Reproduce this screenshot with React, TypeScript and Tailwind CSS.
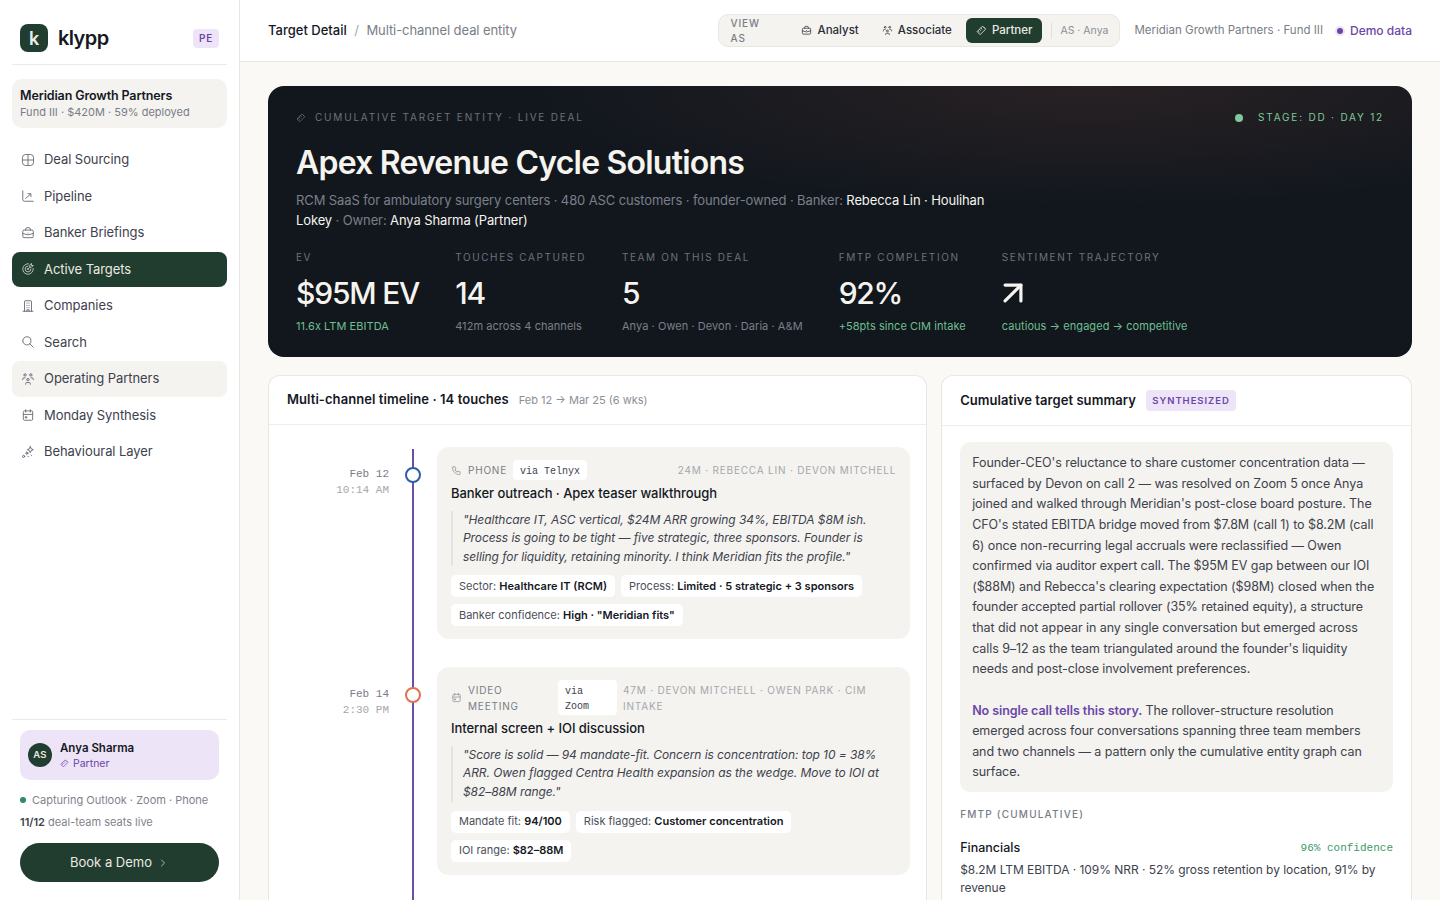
import React from "react";
import {
  TbBriefcase,
  TbCalendarEvent,
  TbChevronRight,
  TbPhone,
  TbSearch,
  TbTargetArrow,
  TbUsersGroup,
} from "react-icons/tb";
import { ArrowUpRight } from "lucide-react";

type IconProps = { className?: string; strokeWidth?: number };

function DealIcon({ className }: IconProps) {
  return (
    <svg viewBox="0 0 24 24" fill="none" stroke="currentColor" strokeWidth="1.5" className={className}>
      <rect x="2.5" y="2.5" width="19" height="19" rx="5.5" />
      <path d="M12 2.5v19M2.5 12h19" />
    </svg>
  );
}

function PipelineIcon({ className }: IconProps) {
  return (
    <svg viewBox="0 0 24 24" fill="none" stroke="currentColor" strokeWidth="1.5" strokeLinecap="round" strokeLinejoin="round" className={className}>
      <path d="M3 3v15a3 3 0 0 0 3 3h15" />
      <path d="M8 16l8-7M12 8h5v5" />
    </svg>
  );
}

function CompanyIcon({ className }: IconProps) {
  return (
    <svg viewBox="0 0 24 24" fill="none" stroke="currentColor" strokeWidth="1.5" strokeLinecap="round" strokeLinejoin="round" className={className}>
      <path d="M6 21V4a1 1 0 0 1 1-1h10a1 1 0 0 1 1 1v17" />
      <path d="M3.5 21h17M10 7h.5M13.5 7h.5M10 11h.5M13.5 11h.5M10 15h.5M13.5 15h.5M10 21v-2.5h4V21" />
    </svg>
  );
}

function BehaviourIcon({ className }: IconProps) {
  return (
    <svg viewBox="0 0 24 24" fill="none" stroke="currentColor" strokeWidth="1.7" strokeLinecap="round" strokeLinejoin="round" className={className}>
      <path d="M16 3l1.6 3.4L21 8l-3.4 1.6L16 13l-1.6-3.4L11 8l3.4-1.6z" />
      <circle cx="10" cy="14" r="1.8" />
      <circle cx="4.5" cy="19.5" r="1.8" />
      <path d="M11.5 19l1 1M17 17l1 1" />
    </svg>
  );
}

function PartnerIcon({ className }: IconProps) {
  return (
    <svg viewBox="0 0 24 24" fill="none" stroke="currentColor" strokeWidth="1.8" strokeLinecap="round" strokeLinejoin="round" className={className}>
      <path d="M15 3l6 6L9 21l-6-6z" />
      <path d="M11 7l2 2M8 10l2 2M5 13l2 2M17 5l2 2" />
    </svg>
  );
}

function Nav({ icon: Icon, label, tone }: { icon: React.ComponentType<IconProps>; label: string; tone?: "active" | "hover" }) {
  const cls =
    tone === "active"
      ? "bg-[#213d30] text-[#ece9e0]"
      : tone === "hover"
        ? "bg-[#f4f3ef] text-[#3d424d]"
        : "text-[#3d424d]";
  return (
    <div className={`flex items-center gap-[9px] rounded-lg px-2 py-2 text-[13px] leading-[19.5px] tracking-[-0.005em] ${cls}`}>
      <Icon strokeWidth={1.5} className={`ml-[1px] h-3.5 w-3.5 shrink-0 ${tone === "active" ? "text-[#c9cfc9]" : "text-[#61666f]"}`} />
      {label}
    </div>
  );
}

function Sidebar() {
  return (
    <aside className="flex h-full w-[240px] shrink-0 flex-col border-r border-[#e8e7e2] bg-white px-3">
      <div className="flex items-center border-b border-[#ebeae5] px-2 pt-6 pb-3">
        <div className="flex h-7 w-7 items-center justify-center rounded-lg bg-[#213d30] text-[18px] font-semibold text-[#e8eee8]">k</div>
        <div className="ml-[10px] text-[20px] font-semibold leading-7 tracking-[-0.03em] text-[#15181f]">klypp</div>
        <div className="ml-auto rounded bg-[#ede4f7] px-[6px] py-[3px] text-[10px] font-semibold leading-[13px] tracking-[0.08em] text-[#6b46a8]">PE</div>
      </div>
      <div className="mt-[14px] rounded-[10px] bg-[#f4f3ef] px-2 pt-[8px] pb-[8px]">
        <div className="text-[12.5px] font-semibold leading-[18px] tracking-[-0.01em] text-[#15181f]">Meridian Growth Partners</div>
        <div className="text-[11px] leading-[15px] text-[#797d87]">Fund III · $420M · 59% deployed</div>
      </div>
      <nav className="mt-[14px] flex flex-col gap-[1px]">
        <Nav icon={DealIcon} label="Deal Sourcing" />
        <Nav icon={PipelineIcon} label="Pipeline" />
        <Nav icon={TbBriefcase} label="Banker Briefings" />
        <Nav icon={TbTargetArrow} label="Active Targets" tone="active" />
        <Nav icon={CompanyIcon} label="Companies" />
        <Nav icon={TbSearch} label="Search" />
        <Nav icon={TbUsersGroup} label="Operating Partners" tone="hover" />
        <Nav icon={TbCalendarEvent} label="Monday Synthesis" />
        <Nav icon={BehaviourIcon} label="Behavioural Layer" />
      </nav>
      <div className="mt-auto border-t border-[#ebeae5] px-2 pt-[10px] pb-[18px]">
        <div className="flex h-[50px] items-center gap-2 rounded-[10px] bg-[#ede4f7] px-2">
          <div className="flex h-6 w-6 items-center justify-center rounded-full bg-[#213d30] text-[9.5px] font-semibold tracking-[0.03em] text-[#ece9e0]">AS</div>
          <div>
            <div className="text-[11.5px] font-semibold leading-[16px] text-[#15181f]">Anya Sharma</div>
            <div className="flex items-center gap-1 text-[10.5px] leading-[15px] text-[#6b46a8]">
              <PartnerIcon className="h-[9px] w-[9px]" />
              Partner
            </div>
          </div>
        </div>
        <div className="mt-[12px] flex items-center gap-[6px] text-[11px] leading-[16px] text-[#7f838c]">
          <span className="h-[6px] w-[6px] rounded-full bg-[#2e8b5e]" />
          Capturing Outlook · Zoom · Phone
        </div>
        <div className="mt-[6px] text-[11px] leading-[16px] text-[#7f838c]">
          <span className="font-semibold text-[#3d424d]">11/12</span> deal-team seats live
        </div>
        <div className="mt-[13px] flex h-[39px] items-center justify-center gap-[5px] rounded-full bg-[#213d30] text-[13px] text-[#ece9e0]">
          Book a Demo
          <TbChevronRight className="h-3 w-3 text-[#aeb6ae]" />
        </div>
      </div>
    </aside>
  );
}

function Header() {
  return (
    <header className="flex h-[62px] shrink-0 items-center border-b border-[#e8e7e2] bg-white px-7">
      <div className="text-[13px] font-medium text-[#15181f]">Target Detail</div>
      <div className="mx-[7.5px] text-[13px] text-[#a5a7ae]">/</div>
      <div className="text-[13px] tracking-[-0.006em] text-[#797d87]">Multi-channel deal entity</div>
      <div className="ml-auto flex h-[33px] items-center rounded-[10px] border border-[#e8e7e2] bg-[#f4f3ef] pl-[11px] pr-[11px]">
        <span className="w-[48px] text-[10px] font-medium tracking-[0.09em] text-[#797d87]">VIEW AS</span>
        <div className="ml-[23px] flex items-center gap-[5px] text-[11.5px] font-medium text-[#2a2e37]">
          <TbBriefcase strokeWidth={1.6} className="h-[11px] w-[11px]" />
          Analyst
        </div>
        <div className="ml-[23px] flex items-center gap-[5px] text-[11.5px] font-medium text-[#2a2e37]">
          <TbUsersGroup strokeWidth={1.6} className="h-[11px] w-[11px]" />
          Associate
        </div>
        <div className="ml-[14px] flex h-[25px] items-center gap-[5px] rounded-md bg-[#213d30] px-[10px] text-[11.5px] font-medium text-[#ece9e0]">
          <PartnerIcon className="h-[11px] w-[11px]" />
          Partner
        </div>
        <div className="mx-[8.5px] h-4 w-px bg-[#e1e0da]" />
        <span className="text-[10.5px] text-[#8b8f98]">AS · Anya</span>
      </div>
      <div className="ml-[14px] text-[11.5px] text-[#797d87]">Meridian Growth Partners · Fund III</div>
      <div className="ml-[14px] flex items-center gap-[7px]">
        <span className="h-[6px] w-[6px] rounded-full bg-[#6b46a8] ring-[2px] ring-[#ede4f7]" />
        <span className="text-[12px] font-medium text-[#6b46a8]">Demo data</span>
      </div>
    </header>
  );
}

function Stat({ label, value, sub, green, icon }: { label: string; value?: string; sub: string; green?: boolean; icon?: boolean }) {
  return (
    <div className="shrink-0">
      <div className="text-[10px] leading-[15px] tracking-[0.16em] text-[#6c717b]">{label}</div>
      <div className="mt-[10px] flex h-[36px] items-center text-[30px] font-medium leading-[36px] tracking-[-0.04em] text-[#f5f4ef]">
        {icon ? <ArrowUpRight className="-my-1 -ml-[8px] h-[38px] w-[38px]" strokeWidth={2} /> : value}
      </div>
      <div className={`mt-[7px] text-[11px] leading-[16px] tracking-[0.005em] ${green ? "text-[#6fbf8f]" : "text-[#7a7f89]"}`}>{sub}</div>
    </div>
  );
}

function Hero() {
  return (
    <section className="relative h-[271px] shrink-0 overflow-hidden rounded-2xl bg-[#12171e] bg-[radial-gradient(ellipse_560px_120px_at_72%_0%,rgba(120,70,55,0.22),transparent)] px-7 pt-6">
      <div className="flex items-center">
        <PartnerIcon className="h-[10px] w-[10px] text-[#6c717b]" />
        <div className="ml-[9px] text-[10px] leading-[15px] tracking-[0.18em] text-[#6c717b]">CUMULATIVE TARGET ENTITY · LIVE DEAL</div>
        <div className="ml-auto flex items-center gap-[15px]">
          <span className="h-2 w-2 rounded-full bg-[#7dcb9c]" />
          <span className="text-[10px] leading-[15px] tracking-[0.18em] text-[#7dcb9c]">STAGE: DD · DAY 12</span>
        </div>
      </div>
      <h1 className="mt-[16px] text-[32px] font-semibold leading-[44px] tracking-[-0.025em] text-[#f5f4ef]">Apex Revenue Cycle Solutions</h1>
      <p className="mt-[5px] w-[700px] text-[13px] leading-[20px] tracking-[-0.009em] text-[#7a7f89]">
        RCM SaaS for ambulatory surgery centers · 480 ASC customers · founder-owned · Banker: <span className="text-[#f5f4ef]">Rebecca Lin · Houlihan Lokey</span> · Owner: <span className="text-[#f5f4ef]">Anya Sharma (Partner)</span>
      </p>
      <div className="mt-[20px] flex gap-9">
        <Stat label="EV" value="$95M EV" sub="11.6x LTM EBITDA" green />
        <Stat label="TOUCHES CAPTURED" value="14" sub="412m across 4 channels" />
        <Stat label="TEAM ON THIS DEAL" value="5" sub="Anya · Owen · Devon · Daria · A&M" />
        <Stat label="FMTP COMPLETION" value="92%" sub="+58pts since CIM intake" green />
        <Stat label="SENTIMENT TRAJECTORY" icon sub="cautious → engaged → competitive" green />
      </div>
    </section>
  );
}

function Tag({ k, v }: { k: string; v: string }) {
  return (
    <div className="flex h-[22px] items-center rounded-[5px] bg-white px-2 text-[11px] text-[#4b4f59]">
      {k}:&nbsp;<span className="font-semibold text-[#15181f]">{v}</span>
    </div>
  );
}

function Touch({
  date,
  time,
  ring,
  icon: Icon,
  channel,
  via,
  meta,
  title,
  quote,
  tags,
  video,
  first,
}: {
  date: string;
  time: string;
  ring: string;
  icon: React.ComponentType<IconProps>;
  channel: string;
  via: string;
  meta: string;
  title: string;
  quote: string;
  tags: [string, string][];
  video?: boolean;
  first?: boolean;
}) {
  return (
    <div className="flex">
      <div className="w-[102px] shrink-0 pt-[19px] text-right font-['Liberation_Mono',monospace] text-[11px] leading-[16px]">
        <div className="text-[#797d87]">{date}</div>
        <div className="text-[#a5a7ae]">{time}</div>
      </div>
      <div className="relative mx-3 flex w-6 shrink-0 justify-center">
        <div className={`w-[2px] bg-[#6b4fa0] ${first ? "mt-[2px]" : ""}`} />
        <div className={`absolute top-[20px] h-4 w-4 rounded-full border-2 bg-white ${ring}`} />
      </div>
      <div className="min-w-0 flex-1 pb-7">
        <div className="rounded-xl bg-[#f4f3ef] px-[14px] pt-[13px] pb-[13px]">
          <div className="flex items-center">
            <Icon strokeWidth={1.6} className="h-[11px] w-[11px] shrink-0 text-[#8b8f98]" />
            <span className={`ml-[6px] text-[10px] leading-[16px] tracking-[0.08em] text-[#797d87] ${video ? "w-[84px] shrink-0" : "shrink-0"}`}>{channel}</span>
            <span className={`ml-[6px] rounded-[4px] bg-white px-[7px] pt-[4px] pb-[1px] font-['Liberation_Mono',monospace] text-[10px] leading-[15px] text-[#3d424d] ${video ? "w-[59px] shrink-0" : "shrink-0"}`}>{via}</span>
            <span className={`${video ? "ml-[6px]" : "ml-auto"} text-[10px] leading-[16px] tracking-[0.08em] text-[#a5a7ae]`}>{meta}</span>
          </div>
          <div className="mt-[4px] text-[13px] font-medium leading-[19.5px] tracking-[-0.004em] text-[#15181f]">{title}</div>
          <div className="mt-[7px] border-l-2 border-[#e5e4df] pl-[10px] text-[12px] italic leading-[18.6px] tracking-[-0.006em] text-[#3d424d]">{quote}</div>
          <div className="mt-[9px] flex flex-wrap gap-x-[6px] gap-y-[7px]">
            {tags.map(([k, v]) => (
              <Tag key={k} k={k} v={v} />
            ))}
          </div>
        </div>
      </div>
    </div>
  );
}

function Timeline() {
  return (
    <div className="min-w-0 rounded-t-xl border border-b-0 border-[#e8e7e2] bg-white">
      <div className="flex h-[49px] items-center gap-[10px] border-b border-[#eeede8] px-[18px]">
        <span className="text-[13px] font-semibold tracking-[0.005em] text-[#15181f]">Multi-channel timeline · 14 touches</span>
        <span className="text-[11px] text-[#8b8f98]">Feb 12 → Mar 25 (6 wks)</span>
      </div>
      <div className="pt-[22px] pl-[18px] pr-4">
        <Touch
          first
          date="Feb 12"
          time="10:14 AM"
          ring="border-[#2f5ca8]"
          icon={TbPhone}
          channel="PHONE"
          via="via Telnyx"
          meta="24M · REBECCA LIN · DEVON MITCHELL"
          title="Banker outreach · Apex teaser walkthrough"
          quote={'"Healthcare IT, ASC vertical, $24M ARR growing 34%, EBITDA $8M ish. Process is going to be tight — five strategic, three sponsors. Founder is selling for liquidity, retaining minority. I think Meridian fits the profile."'}
          tags={[
            ["Sector", "Healthcare IT (RCM)"],
            ["Process", "Limited · 5 strategic + 3 sponsors"],
            ["Banker confidence", 'High · "Meridian fits"'],
          ]}
        />
        <Touch
          video
          date="Feb 14"
          time="2:30 PM"
          ring="border-[#e0704f]"
          icon={TbCalendarEvent}
          channel="VIDEO MEETING"
          via="via Zoom"
          meta="47M · DEVON MITCHELL · OWEN PARK · CIM INTAKE"
          title="Internal screen + IOI discussion"
          quote={'"Score is solid — 94 mandate-fit. Concern is concentration: top 10 = 38% ARR. Owen flagged Centra Health expansion as the wedge. Move to IOI at $82–88M range."'}
          tags={[
            ["Mandate fit", "94/100"],
            ["Risk flagged", "Customer concentration"],
            ["IOI range", "$82–88M"],
          ]}
        />
      </div>
    </div>
  );
}

function Summary() {
  return (
    <div className="min-w-0 rounded-t-xl border border-b-0 border-[#e8e7e2] bg-white">
      <div className="flex h-[50px] items-center gap-[10px] border-b border-[#eeede8] px-[18px]">
        <span className="text-[13px] font-semibold tracking-[0.005em] text-[#15181f]">Cumulative target summary</span>
        <span className="rounded bg-[#ede4f7] px-[6.5px] py-[3px] text-[9.5px] font-semibold leading-[15px] tracking-[0.1em] text-[#6b46a8]">SYNTHESIZED</span>
      </div>
      <div className="px-[18px] pt-4">
        <div className="rounded-[10px] bg-[#f4f3ef] px-3 pt-[11px] pb-[9px] text-[12.5px] leading-[20.625px] tracking-[-0.006em] text-[#3d424d]">
          Founder-CEO's reluctance to share customer concentration data — surfaced by Devon on call 2 — was resolved on Zoom 5 once Anya joined and walked through Meridian's post-close board posture. The CFO's stated EBITDA bridge moved from $7.8M (call 1) to $8.2M (call 6) once non-recurring legal accruals were reclassified — Owen confirmed via auditor expert call. The $95M EV gap between our IOI ($88M) and Rebecca's clearing expectation ($98M) closed when the founder accepted partial rollover (35% retained equity), a structure that did not appear in any single conversation but emerged across calls 9–12 as the team triangulated around the founder's liquidity needs and post-close involvement preferences.
          <br />
          <br />
          <span className="font-semibold text-[#6b46a8]">No single call tells this story.</span> The rollover-structure resolution emerged across four conversations spanning three team members and two channels — a pattern only the cumulative entity graph can surface.
        </div>
        <div className="mt-[15px] text-[10px] font-medium leading-[15px] tracking-[0.12em] text-[#797d87]">FMTP (CUMULATIVE)</div>
        <div className="mt-[16px] flex items-center justify-between">
          <span className="text-[12.5px] font-medium leading-[19px] text-[#15181f]">Financials</span>
          <span className="pt-[2px] font-['Liberation_Mono',monospace] text-[11px] text-[#3d9a6a]">96% confidence</span>
        </div>
        <div className="mt-[4px] text-[12px] leading-[18px] tracking-[-0.004em] text-[#3d424d]">$8.2M LTM EBITDA · 109% NRR · 52% gross retention by location, 91% by revenue</div>
      </div>
    </div>
  );
}

export default function App() {
  return (
    <div className="flex h-screen w-full overflow-hidden bg-[#faf9f6] font-['Inter',sans-serif]">
      <Sidebar />
      <main className="flex min-w-0 flex-1 flex-col overflow-hidden">
        <Header />
        <div className="flex flex-1 flex-col gap-[18px] overflow-hidden px-7 pt-6">
          <Hero />
          <div className="grid grid-cols-[1.4fr_1fr] gap-[14px]">
            <Timeline />
            <Summary />
          </div>
        </div>
      </main>
    </div>
  );
}
